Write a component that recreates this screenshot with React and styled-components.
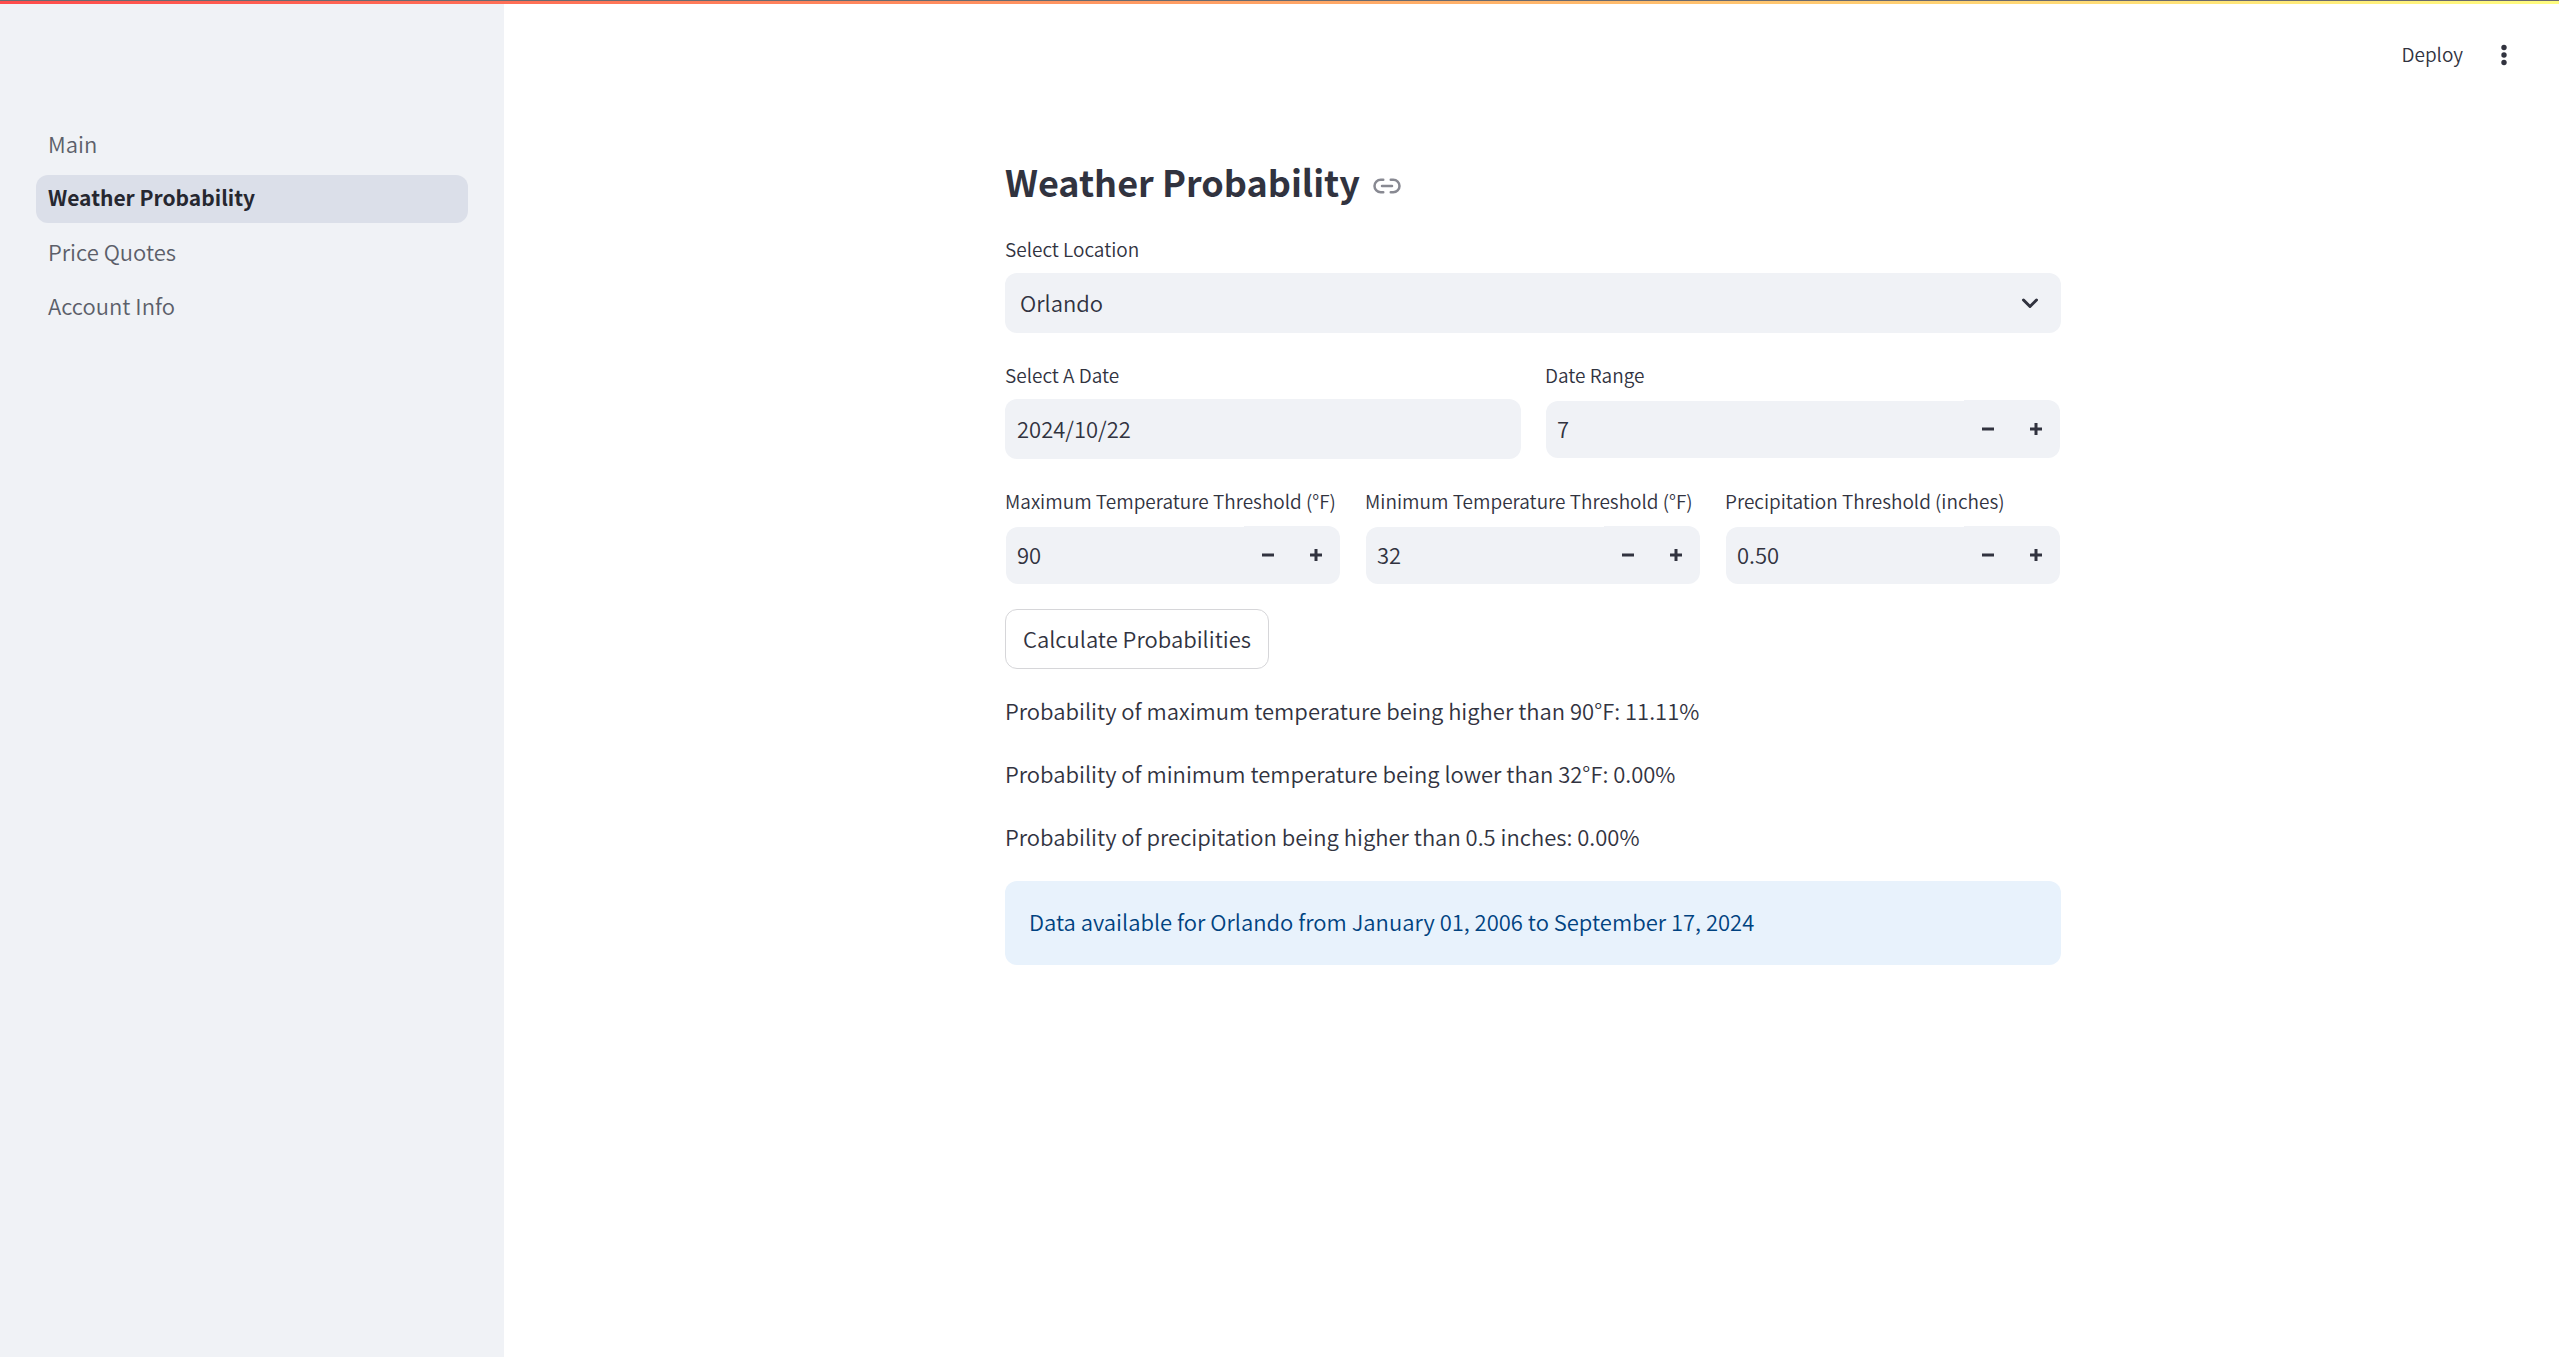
import { useState } from 'react';
import styled, { createGlobalStyle } from 'styled-components';
import { Link2 } from 'lucide-react';

const GlobalStyle = createGlobalStyle`
  * {
    box-sizing: border-box;
  }
  body {
    margin: 0;
    background-color: #ffffff;
    color: #31333f;
    font-family: 'Noto Sans CJK JP', 'Noto Sans', sans-serif;
    font-size: 22px;
    font-weight: 350;
  }
  button,
  input,
  select {
    font-family: inherit;
    font-size: inherit;
    font-weight: inherit;
    color: inherit;
  }
`;

const Page = styled.div`
  min-height: 100vh;
  display: flex;
`;

const Decoration = styled.div`
  position: fixed;
  top: 0;
  left: 0;
  right: 0;
  height: 4px;
  border-top: 1px solid #6b6b6f;
  background-image: linear-gradient(90deg, #ff4b4b, #fffd80);
  z-index: 10;
`;

const Sidebar = styled.aside`
  flex: 0 0 504px;
  padding: 118px 36px 0;
  background-color: #f0f2f6;
`;

const NavList = styled.ul`
  margin: 0;
  padding: 0;
  list-style: none;
`;

const NavLink = styled.a`
  display: block;
  margin: 3px 0 6px;
  padding: 0 12px 3px;
  border-radius: 12px;
  line-height: 45px;
  text-decoration: none;
  color: ${(props) => (props.$active ? '#262730' : '#5c5f6a')};
  font-size: ${(props) => (props.$active ? '21px' : '22px')};
  font-weight: ${(props) => (props.$active ? 700 : 350)};
  background-color: ${(props) => (props.$active ? '#dbdfe9' : 'transparent')};
`;

const Main = styled.main`
  flex: 1;
  min-width: 0;
  padding-left: 3px;
`;

const Toolbar = styled.header`
  height: 110px;
  padding: 0 36px;
  display: flex;
  justify-content: flex-end;
  align-items: center;
  gap: 10px;
`;

const ToolbarButton = styled.button`
  height: 36px;
  padding: 0 12px 3px;
  display: flex;
  align-items: center;
  border: none;
  background: none;
  font-size: 19px;
`;

const MenuButton = styled(ToolbarButton)`
  padding: 0 12px;
`;

const Content = styled.div`
  max-width: 1056px;
  margin: 0 auto;
  padding: 47px 0 60px;
  display: flex;
  flex-direction: column;
  gap: 24px;
`;

const Title = styled.h2`
  margin: 0 0 1px;
  display: flex;
  align-items: center;
  gap: 12px;
  font-size: 36px;
  font-weight: 700;
  line-height: 49px;

  a {
    display: flex;
    margin-top: 9px;
    color: #888992;
  }
`;

const Row = styled.div`
  display: grid;
  grid-template-columns: repeat(${(props) => props.$columns}, 1fr);
  gap: 24px;
`;

const Field = styled.div`
  min-width: 0;
`;

const Label = styled.label`
  display: block;
  margin-bottom: 6px;
  font-size: 19px;
  line-height: 36px;
  white-space: nowrap;
`;

const SelectBox = styled.div`
  display: grid;
  align-items: center;
  border-radius: 12px;
  background-color: #f0f2f6;

  select,
  svg {
    grid-area: 1 / 1;
  }
  select {
    width: 100%;
    height: 60px;
    padding: 0 15px 3px;
    border: none;
    background: none;
    appearance: none;
  }
  svg {
    justify-self: end;
    margin-right: 19px;
    pointer-events: none;
  }
`;

const DateInput = styled.input`
  width: 100%;
  height: 60px;
  padding: 0 12px 3px;
  border: none;
  border-radius: 12px;
  background-color: #f0f2f6;
`;

const NumberBox = styled.div`
  height: 60px;
  padding: 1px;
  display: flex;

  input {
    flex: 1;
    min-width: 0;
    margin-top: 1px;
    padding: 0 11px 3px;
    border: none;
    border-radius: 12px 0 0 12px;
    background-color: #f0f2f6;
  }
`;

const StepButton = styled.button`
  width: 48px;
  padding: 0;
  display: flex;
  align-items: center;
  justify-content: center;
  border: none;
  background-color: #f0f2f6;

  &:last-child {
    border-radius: 0 12px 12px 0;
  }
`;

const Calculate = styled.button`
  align-self: flex-start;
  height: 60px;
  padding: 0 17px 3px;
  border: 1px solid #d6d6d9;
  border-radius: 12px;
  background-color: #ffffff;
`;

const Results = styled.div`
  padding-bottom: 3px;
  display: flex;
  flex-direction: column;
  gap: 28px;

  p {
    margin: 0;
    line-height: 35px;
  }
`;

const Info = styled.div`
  padding: 24px 24px 27px;
  border-radius: 12px;
  background-color: #e8f2fc;
  color: #004280;
  line-height: 33px;
`;

const pages = ['Main', 'Weather Probability', 'Price Quotes', 'Account Info'];

const NumberField = ({ id, label, initial, step = 1, digits = 0 }) => {
  const [value, setValue] = useState(initial);
  const change = (amount) => setValue((Number(value) + amount).toFixed(digits));

  return (
    <Field>
      <Label htmlFor={id}>{label}</Label>
      <NumberBox>
        <input
          id={id}
          inputMode="decimal"
          value={value}
          onChange={(e) => setValue(e.target.value)}
        />
        <StepButton aria-label={`Decrease ${label}`} onClick={() => change(-step)}>
          <svg width="12" height="12" viewBox="0 0 12 12">
            <path d="M0 6h12" stroke="currentColor" strokeWidth="3" />
          </svg>
        </StepButton>
        <StepButton aria-label={`Increase ${label}`} onClick={() => change(step)}>
          <svg width="12" height="12" viewBox="0 0 12 12">
            <path d="M0 6h12M6 0v12" stroke="currentColor" strokeWidth="3" />
          </svg>
        </StepButton>
      </NumberBox>
    </Field>
  );
};

const App = () => {
  const [date, setDate] = useState('2024/10/22');

  return (
    <>
      <GlobalStyle />
      <Decoration />
      <Page>
        <Sidebar>
          <nav>
            <NavList>
              {pages.map((page) => (
                <li key={page}>
                  <NavLink href="#" $active={page === 'Weather Probability'}>
                    {page}
                  </NavLink>
                </li>
              ))}
            </NavList>
          </nav>
        </Sidebar>
        <Main>
          <Toolbar>
            <ToolbarButton>Deploy</ToolbarButton>
            <MenuButton aria-label="Menu">
              <svg width="14" height="24" viewBox="0 0 14 24" fill="currentColor">
                <circle cx="7" cy="4.5" r="2.7" />
                <circle cx="7" cy="12" r="2.7" />
                <circle cx="7" cy="19.5" r="2.7" />
              </svg>
            </MenuButton>
          </Toolbar>
          <Content>
            <Title id="weather-probability">
              Weather Probability
              <a href="#weather-probability" aria-label="Link to heading">
                <Link2 size={30} />
              </a>
            </Title>
            <Field>
              <Label htmlFor="location">Select Location</Label>
              <SelectBox>
                <select id="location" defaultValue="Orlando">
                  <option>Orlando</option>
                </select>
                <svg width="24" height="24" viewBox="0 0 24 24" fill="none">
                  <path
                    d="M5.5 9l6.5 6.5L18.5 9"
                    stroke="currentColor"
                    strokeWidth="3"
                    strokeLinecap="round"
                    strokeLinejoin="round"
                  />
                </svg>
              </SelectBox>
            </Field>
            <Row $columns={2}>
              <Field>
                <Label htmlFor="date">Select A Date</Label>
                <DateInput
                  id="date"
                  value={date}
                  onChange={(e) => setDate(e.target.value)}
                />
              </Field>
              <NumberField id="range" label="Date Range" initial="7" />
            </Row>
            <Row $columns={3}>
              <NumberField
                id="max-temp"
                label="Maximum Temperature Threshold (°F)"
                initial="90"
              />
              <NumberField
                id="min-temp"
                label="Minimum Temperature Threshold (°F)"
                initial="32"
              />
              <NumberField
                id="precipitation"
                label="Precipitation Threshold (inches)"
                initial="0.50"
                step={0.01}
                digits={2}
              />
            </Row>
            <Calculate>Calculate Probabilities</Calculate>
            <Results>
              <p>Probability of maximum temperature being higher than 90°F: 11.11%</p>
              <p>Probability of minimum temperature being lower than 32°F: 0.00%</p>
              <p>Probability of precipitation being higher than 0.5 inches: 0.00%</p>
            </Results>
            <Info>Data available for Orlando from January 01, 2006 to September 17, 2024</Info>
          </Content>
        </Main>
      </Page>
    </>
  );
};

export default App;
